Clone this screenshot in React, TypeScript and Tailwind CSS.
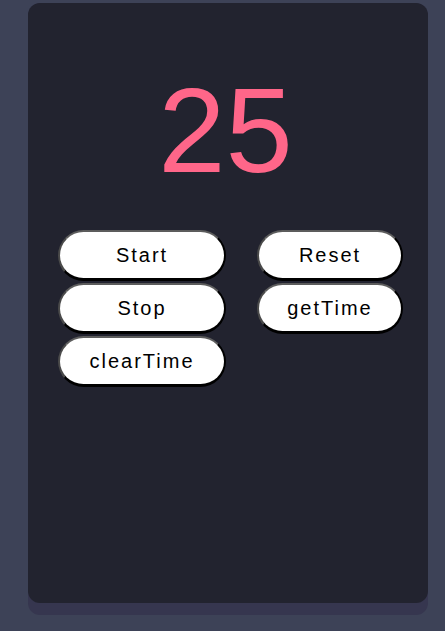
import * as React from "react"

function TimerButton({ label, width }: { label: string; width: string }) {
  return (
    <button
      className={`${width} h-[51px] rounded-full bg-white border-2 border-t-[#5c5c5c] border-l-[#4a4a4a] border-b-[3px] border-b-black border-r-black text-[20px] tracking-[2px] text-black`}
      style={{ fontFamily: '"Liberation Sans", Arial, sans-serif' }}
    >
      {label}
    </button>
  )
}

export default function App() {
  return (
    <div className="w-[445px] h-[631px] bg-[#3d4257] pt-[3px] pl-[28px]">
      <div className="w-[400px] rounded-xl bg-[#36364f] pb-3">
        <div className="h-[600px] rounded-xl bg-[#22232f] pt-[67px]">
          <div
            className="text-center text-[121px] leading-none text-[#ff6689] pr-[5px]"
            style={{ fontFamily: '"Liberation Sans", Arial, sans-serif' }}
          >
            25
          </div>
          <div className="flex mt-[39px] pl-[30px] gap-[31px]">
            <div className="flex flex-col gap-[2px]">
              <TimerButton label="Start" width="w-[168px]" />
              <TimerButton label="Stop" width="w-[168px]" />
              <TimerButton label="clearTime" width="w-[168px]" />
            </div>
            <div className="flex flex-col gap-[2px]">
              <TimerButton label="Reset" width="w-[146px]" />
              <TimerButton label="getTime" width="w-[146px]" />
            </div>
          </div>
        </div>
      </div>
    </div>
  )
}
